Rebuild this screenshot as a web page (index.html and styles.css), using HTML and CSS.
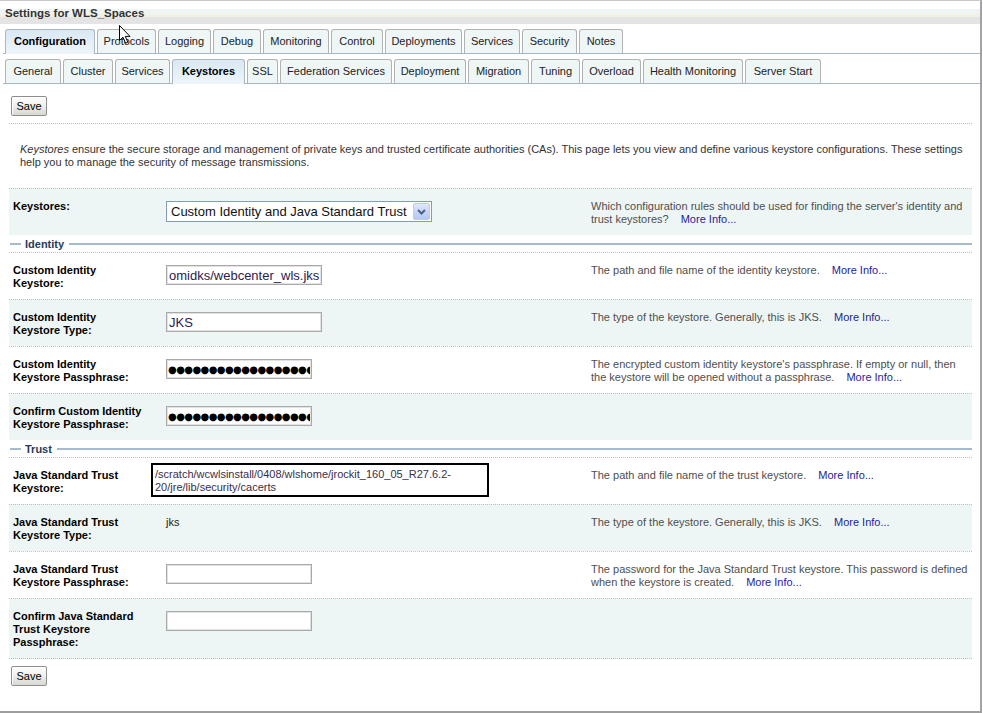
FILE: index.html
```html
<!DOCTYPE html>
<html lang="en">
<head>
<meta charset="utf-8">
<title>Settings for WLS_Spaces</title>
<link rel="stylesheet" href="styles.css">
</head>
<body>
<div class="frame">
  <div class="titlebar">Settings for WLS_Spaces</div>

  <div class="tabs top">
    <span class="tab sel">Configuration</span>
    <span class="tab">Protocols</span>
    <span class="tab">Logging</span>
    <span class="tab">Debug</span>
    <span class="tab">Monitoring</span>
    <span class="tab">Control</span>
    <span class="tab">Deployments</span>
    <span class="tab">Services</span>
    <span class="tab">Security</span>
    <span class="tab">Notes</span>
  </div>

  <div class="tabs sub">
    <span class="tab">General</span>
    <span class="tab">Cluster</span>
    <span class="tab">Services</span>
    <span class="tab sel">Keystores</span>
    <span class="tab">SSL</span>
    <span class="tab">Federation Services</span>
    <span class="tab">Deployment</span>
    <span class="tab">Migration</span>
    <span class="tab">Tuning</span>
    <span class="tab">Overload</span>
    <span class="tab">Health Monitoring</span>
    <span class="tab">Server Start</span>
  </div>

  <div class="content">
    <div class="bar"><button class="btn">Save</button></div>

    <p class="desc"><i>Keystores</i> ensure the secure storage and management of private keys and trusted certificate authorities (CAs). This page lets you view and define various keystore configurations. These settings<br>help you to manage the security of message transmissions.</p>

    <div class="row tint">
      <label class="lbl">Keystores:</label>
      <div class="field">
        <div class="selectwrap">
          <select class="sel-box"><option>Custom Identity and Java Standard Trust</option></select>
          <span class="sel-btn"><svg width="11" height="8" viewBox="0 0 11 8"><path d="M2 2 L5.5 5.5 L9 2" fill="none" stroke="#4d6185" stroke-width="2"/></svg></span>
        </div>
      </div>
      <div class="help">Which configuration rules should be used for finding the server's identity and<br>trust keystores? <a class="more">More Info...</a></div>
    </div>

    <div class="section"><span>Identity</span></div>

    <div class="row">
      <label class="lbl">Custom Identity<br>Keystore:</label>
      <div class="field"><input class="inp" type="text" value="omidks/webcenter_wls.jks"></div>
      <div class="help">The path and file name of the identity keystore. <a class="more">More Info...</a></div>
    </div>
    <div class="row tint">
      <label class="lbl">Custom Identity<br>Keystore Type:</label>
      <div class="field"><input class="inp" type="text" value="JKS"></div>
      <div class="help">The type of the keystore. Generally, this is JKS. <a class="more">More Info...</a></div>
    </div>
    <div class="row">
      <label class="lbl">Custom Identity<br>Keystore Passphrase:</label>
      <div class="field"><input class="inp pw" type="text" value="●●●●●●●●●●●●●●●●●●●●●●" readonly></div>
      <div class="help">The encrypted custom identity keystore's passphrase. If empty or null, then<br>the keystore will be opened without a passphrase. <a class="more">More Info...</a></div>
    </div>
    <div class="row tint">
      <label class="lbl">Confirm Custom Identity<br>Keystore Passphrase:</label>
      <div class="field"><input class="inp pw" type="text" value="●●●●●●●●●●●●●●●●●●●●●●" readonly></div>
      <div class="help"></div>
    </div>

    <div class="section"><span>Trust</span></div>

    <div class="row">
      <label class="lbl">Java Standard Trust<br>Keystore:</label>
      <div class="field"><div class="pathbox">/scratch/wcwlsinstall/0408/wlshome/jrockit_160_05_R27.6.2-<br>20/jre/lib/security/cacerts</div></div>
      <div class="help">The path and file name of the trust keystore. <a class="more">More Info...</a></div>
    </div>
    <div class="row tint">
      <label class="lbl">Java Standard Trust<br>Keystore Type:</label>
      <div class="field"><span class="val">jks</span></div>
      <div class="help">The type of the keystore. Generally, this is JKS. <a class="more">More Info...</a></div>
    </div>
    <div class="row">
      <label class="lbl">Java Standard Trust<br>Keystore Passphrase:</label>
      <div class="field"><input class="inp short" type="password" value=""></div>
      <div class="help">The password for the Java Standard Trust keystore. This password is defined<br>when the keystore is created. <a class="more">More Info...</a></div>
    </div>
    <div class="row tint last">
      <label class="lbl">Confirm Java Standard<br>Trust Keystore<br>Passphrase:</label>
      <div class="field"><input class="inp short" type="password" value=""></div>
      <div class="help"></div>
    </div>

    <div class="bar bottom"><button class="btn">Save</button></div>
  </div>

  <svg class="cursor" width="13" height="20" viewBox="0 0 13 20"><path d="M0.5 0.5 L0.5 15.5 L4 12.2 L6.6 18.2 L8.8 17.2 L6.3 11.4 L11 11.4 Z" fill="#fff" stroke="#000" stroke-width="1" stroke-linejoin="miter"/></svg>
</div>
</body>
</html>
```

FILE: styles.css
```css
* { box-sizing: border-box; }

body {
  margin: 0;
  background: #fff;
  color: #000;
  font: 11px/13px "Liberation Sans", Arial, sans-serif;
}

.frame {
  position: relative;
  width: 982px;
  height: 713px;
  border-top: 1px solid #c8c8c8;
  border-right: 2px solid #a3a3a3;
  border-bottom: 2px solid #9d9d9d;
}

.titlebar {
  height: 23px;
  padding: 2px 0 0 5px;
  line-height: 21px;
  font-weight: bold;
  font-size: 11.5px;
  color: #333;
  background: linear-gradient(to bottom, #ffffff 0 8px, #eef5f4 8px 13px, #f2efe3 13px 16px, #e4e4e4 16px 23px);
}

.tabs {
  display: grid;
  grid-auto-flow: column;
  column-gap: 2px;
  align-items: end;
  justify-content: start;
  margin: 5px 0 0 3px;
  padding-left: 2px;
  height: 25px;
  border-bottom: 1px solid #a5b7cd;
}

.tabs.top {
  grid-template-columns: 90px 59px 53px 48px 66px 52px 77px 56px 55px 44px;
}

.tabs.sub {
  grid-template-columns: 56px 50px 55px 73px 31px 112px 72px 61px 49px 59px 100px 76px;
}

.tab {
  height: 24px;
  border: 1px solid #b2b2b2;
  border-bottom: none;
  border-radius: 3px 3px 0 0;
  background: #eff6f6;
  color: #222;
  font-size: 11px;
  line-height: 23px;
  text-align: center;
  white-space: nowrap;
  overflow: hidden;
}

.tab.sel {
  height: 25px;
  margin-bottom: -1px;
  font-weight: bold;
  color: #000;
  border-color: #a9b6c4;
  background: linear-gradient(to bottom, #d9e8f2, #e6f0f7 60%, #eef5fa);
}

.content {
  padding: 0 8px 0 9px;
}

.bar {
  padding: 12px 0 7px 2px;
  border-bottom: 1px dotted #bcbcbc;
}

.bar.bottom {
  border-bottom: none;
  padding-top: 7px;
}

.btn {
  display: block;
  width: 36px;
  height: 20px;
  padding: 0;
  font: 11px "Liberation Sans", Arial, sans-serif;
  color: #000;
  border: 1px solid #8e8e8e;
  border-radius: 2px;
  background: linear-gradient(to bottom, #fdfdfb, #f0f0ec 45%, #d8d8d2);
  box-shadow: inset 1px 1px 0 #fff;
}

.desc {
  margin: 19px 0 19px;
  padding-left: 11px;
  color: #333;
}

.row {
  display: grid;
  grid-template-columns: 153px 425px 1fr;
  padding: 11px 4px 9px 4px;
  min-height: 47px;
  border-top: 1px dotted #c2c2c2;
}

.row.tint { background: #eef6f5; }
.row.last { border-bottom: 1px dotted #c2c2c2; }

.lbl {
  font-weight: bold;
  color: #000;
}

.field { position: relative; }

.help {
  color: #4e4e4e;
  white-space: nowrap;
}

.more {
  color: #1d1d9a;
  margin-left: 9px;
  text-decoration: none;
}

.section {
  display: flex;
  align-items: center;
  height: 17px;
  padding-top: 1px;
}

.section::before {
  content: "";
  width: 11px;
  height: 2px;
  background: #a5b9cf;
  margin-left: 1px;
}

.section::after {
  content: "";
  flex: 1;
  height: 2px;
  background: #a5b9cf;
}

.section span {
  padding: 0 5px 0 4px;
  font-weight: bold;
  color: #243c5c;
}

.inp {
  display: block;
  width: 156px;
  height: 20px;
  margin-top: 1px;
  padding: 0 2px;
  border: 1px solid #a9a9a9;
  box-shadow: inset 0 0 0 1px #e2e2e2;
  background: #fff;
  font: 13px "Liberation Sans", Arial, sans-serif;
  color: #2d2050;
  outline: none;
}

.inp.pw {
  width: 146px;
  padding: 0 1px;
  font: 10px "DejaVu Sans", sans-serif;
  letter-spacing: -0.6px;
  color: #000;
}

.inp.short { width: 146px; }

.selectwrap {
  position: relative;
  width: 266px;
  height: 21px;
  margin-top: 1px;
}

.sel-box {
  appearance: none;
  -webkit-appearance: none;
  display: block;
  width: 266px;
  height: 21px;
  padding: 0 0 0 4px;
  border: 1px solid #7f9db9;
  border-radius: 0;
  background: #fff;
  font: 13px "Liberation Sans", Arial, sans-serif;
  color: #111;
  outline: none;
}

.sel-btn {
  position: absolute;
  top: 2px;
  right: 2px;
  width: 17px;
  height: 17px;
  display: flex;
  align-items: center;
  justify-content: center;
  border: 1px solid #bccbe9;
  border-radius: 2px;
  background: linear-gradient(to bottom, #dfe8fc, #c5d5f7 55%, #b6c9f3);
  pointer-events: none;
}

.pathbox {
  width: 338px;
  height: 34px;
  margin: -6px 0 -2px -15px;
  padding: 3px 2px;
  border: 2px solid #000;
  color: #3b2d4a;
}

.val {
  color: #222;
}

.cursor {
  position: absolute;
  left: 119px;
  top: 24px;
}
```
